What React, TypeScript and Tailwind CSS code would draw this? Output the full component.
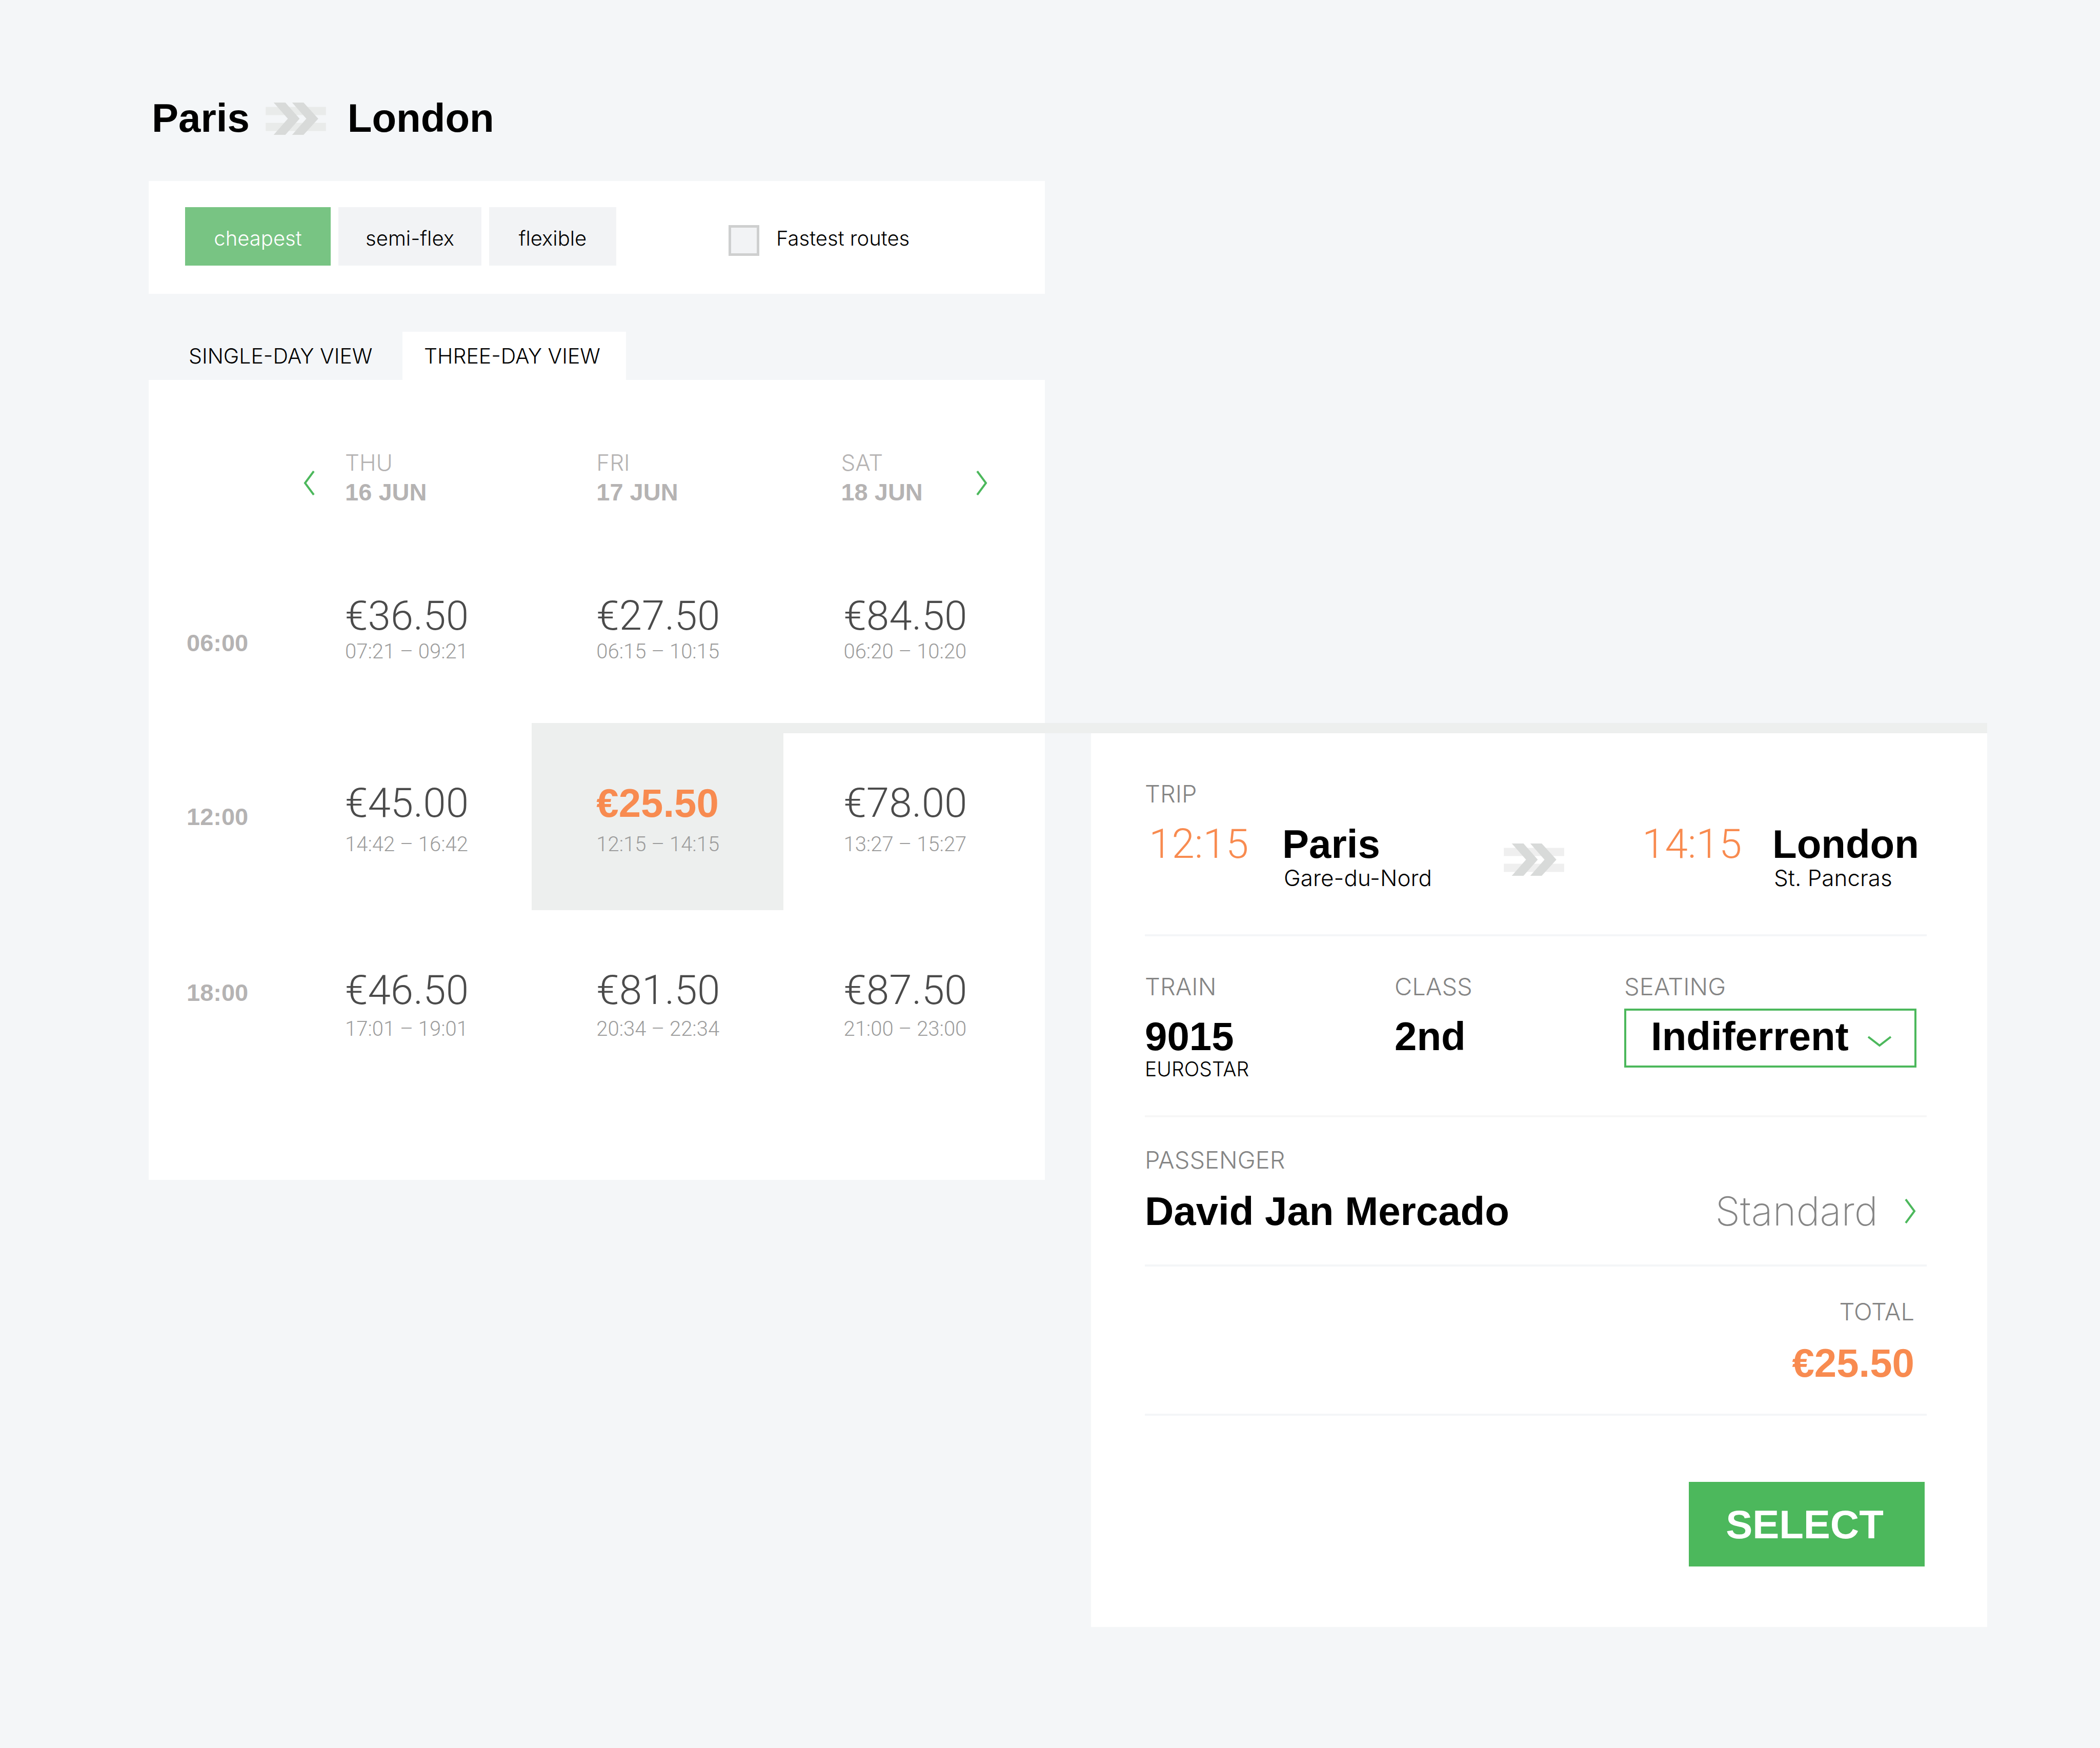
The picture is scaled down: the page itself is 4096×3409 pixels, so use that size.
import React, { useState } from 'react'

const light = 'font-["Inter",sans-serif] font-light'
const thin = 'font-["Inter",sans-serif] font-extralight'
const numeric = 'font-["Roboto",sans-serif] font-light'
const bold = 'font-["Liberation_Sans",sans-serif] font-bold'
const label = 'font-["Inter",sans-serif] font-light text-[47px] leading-[56px] text-[#858585]'

type Fare = { price: string; times: string }
type Row = { hour: string; hourPad: string; timePad: string; fares: Fare[] }

const days = [
  { day: 'THU', date: '16 JUN' },
  { day: 'FRI', date: '17 JUN' },
  { day: 'SAT', date: '18 JUN' },
]

const rows: Row[] = [
  {
    hour: '06:00',
    hourPad: 'pt-[179px]',
    timePad: 'pt-[6px]',
    fares: [
      { price: '€36.50', times: '07:21 – 09:21' },
      { price: '€27.50', times: '06:15 – 10:15' },
      { price: '€84.50', times: '06:20 – 10:20' },
    ],
  },
  {
    hour: '12:00',
    hourPad: 'pt-[153px]',
    timePad: 'pt-[17px]',
    fares: [
      { price: '€45.00', times: '14:42 – 16:42' },
      { price: '€25.50', times: '12:15 – 14:15' },
      { price: '€78.00', times: '13:27 – 15:27' },
    ],
  },
  {
    hour: '18:00',
    hourPad: 'pt-[131px]',
    timePad: 'pt-[12px]',
    fares: [
      { price: '€46.50', times: '17:01 – 19:01' },
      { price: '€81.50', times: '20:34 – 22:34' },
      { price: '€87.50', times: '21:00 – 23:00' },
    ],
  },
]

const columnPad = ['pl-[127px]', 'pl-[126px]', 'pl-[117px]']

function TrackArrow({ track, className }: { track: string; className: string }) {
  return (
    <svg viewBox="0 0 125 67" className={`h-[63px] w-[118px] shrink-0 ${className}`} aria-hidden="true">
      <path d="M0 9h125v17H0zM0 42h125v17H0z" fill={track} />
      <path d="M16.5 0h24.2l29.6 33.5L40.7 67H16.5L46 33.5z" fill="#d8dad9" />
      <path d="M54.8 0h23.7L109 33.5 78.5 67H54.8l29.5-33.5z" fill="#d8dad9" />
    </svg>
  )
}

function Chevron({ dir }: { dir: 'left' | 'right' }) {
  return (
    <svg viewBox="0 0 22 48" className="h-12 w-[22px]" fill="none" stroke="#4cb85c" strokeWidth="4" aria-hidden="true">
      <path d={dir === 'left' ? 'M20 1L3 24l17 23' : 'M2 1l17 23L2 47'} />
    </svg>
  )
}

function Filters() {
  const [active, setActive] = useState('cheapest')
  const options = [
    { name: 'cheapest', width: 'w-[284px]' },
    { name: 'semi-flex', width: 'w-[279px]' },
    { name: 'flexible', width: 'w-[248px]' },
  ]
  return (
    <section className={`mt-[83px] flex bg-white px-[71px] pt-[51px] pb-[55px] ${light} text-[40px] leading-[56px] text-black`}>
      <div className="flex gap-[15px]">
        {options.map((o) => (
          <button
            key={o.name}
            type="button"
            onClick={() => setActive(o.name)}
            className={`h-[114px] pt-2 ${o.width} ${active === o.name ? 'bg-[#78c483] text-white' : 'bg-[#f2f3f5]'}`}
          >
            {o.name}
          </button>
        ))}
      </div>
      <label className="ml-[219px] flex items-center gap-[33px] pt-2">
        <input
          type="checkbox"
          className="mt-2 size-[60px] appearance-none border-[5px] border-[#cecfcf] bg-[#f2f3f5] checked:bg-[#78c483]"
        />
        Fastest routes
      </label>
    </section>
  )
}

function FareTable() {
  return (
    <section className="bg-white pt-[133px] pb-[161px]">
      <table className="w-full table-fixed border-collapse text-left">
        <colgroup>
          <col className="w-[14.65%]" />
          <col className="w-[28.1%]" />
          <col className="w-[28.1%]" />
          <col />
        </colgroup>
        <thead>
          <tr className="h-[171px] align-top text-[#b5b3b3]">
            <td />
            {days.map((d, i) => {
              const text = (
                <span className="block">
                  <span className={`block text-[44px] leading-[56px] ${light}`}>{d.day}</span>
                  <span className={`block text-[47px] leading-[60px] ${bold}`}>{d.date}</span>
                </span>
              )
              if (i === 0)
                return (
                  <th key={d.day} scope="col">
                    <div className="flex gap-[59px] pl-[46px]">
                      <button type="button" aria-label="Previous days" className="pt-[19px]">
                        <Chevron dir="left" />
                      </button>
                      {text}
                    </div>
                  </th>
                )
              if (i === 2)
                return (
                  <th key={d.day} scope="col">
                    <div className="flex justify-between px-[112px]">
                      {text}
                      <button type="button" aria-label="Next days" className="pt-[19px]">
                        <Chevron dir="right" />
                      </button>
                    </div>
                  </th>
                )
              return (
                <th key={d.day} scope="col" className="pl-[126px]">
                  {text}
                </th>
              )
            })}
          </tr>
        </thead>
        <tbody>
          {rows.map((r) => (
            <tr key={r.hour} className="h-[365px] align-top">
              <th scope="row" className={`pl-[74px] text-[47px] leading-[60px] text-[#b5b3b3] ${bold} ${r.hourPad}`}>
                {r.hour}
              </th>
              {r.fares.map((f, i) => {
                const selected = f.price === '€25.50'
                return (
                  <td key={f.price} className={selected ? 'bg-[#edefee]' : ''}>
                    <button type="button" aria-pressed={selected} className={`block w-full pt-[116px] text-left ${columnPad[i]}`}>
                      <span
                        className={`block leading-[80px] ${selected ? bold : numeric} ${selected ? 'text-[78px] text-[#f88b50]' : 'text-[80px] text-[#4b4b4b]'}`}
                      >
                        {f.price}
                      </span>
                      <span className={`block text-[40px] leading-[48px] text-[#9c9c9c] ${numeric} ${r.timePad}`}>{f.times}</span>
                    </button>
                  </td>
                )
              })}
            </tr>
          ))}
        </tbody>
      </table>
    </section>
  )
}

function Stop({ city, station }: { city: string; station: string }) {
  return (
    <div className="text-black">
      <div className={`text-[78px] leading-[80px] ${bold}`}>{city}</div>
      <div className={`pl-[3px] text-[44px] leading-[52px] whitespace-nowrap ${light}`}>{station}</div>
    </div>
  )
}

function TripCard() {
  return (
    <aside className="relative mt-[1410px] border-t-[20px] border-[#edefee] bg-white pr-[118px] pb-[118px] pl-[105px]">
      {/* Bar that ties the chosen fare to this card */}
      <div className="absolute -top-5 right-0 h-5 w-[162.4%] bg-[#edefee]" />

      <section className="border-b-4 border-[#f4f6f8] pt-[90px] pb-[84px]">
        <h2 className={label}>TRIP</h2>
        <div className="mt-[30px] grid grid-cols-[268fr_432fr_270fr_254fr_301fr] text-[80px] leading-[80px]">
          <time className={`pl-2 text-[#f88b50] ${numeric}`}>12:15</time>
          <Stop city="Paris" station="Gare-du-Nord" />
          <TrackArrow track="#efefef" className="mt-[39px]" />
          <time className={`text-[#f88b50] ${numeric}`}>14:15</time>
          <Stop city="London" station="St. Pancras" />
        </div>
      </section>

      <section className="grid grid-cols-[487fr_448fr_590fr] border-b-4 border-[#f7f7f7] pt-[70px] pb-[66px] text-black">
        <div>
          <h2 className={label}>TRAIN</h2>
          <div className={`mt-[29px] text-[78px] leading-[80px] ${bold}`}>9015</div>
          <div className={`text-[39px] leading-[48px] ${light}`}>EUROSTAR</div>
        </div>
        <div>
          <h2 className={label}>CLASS</h2>
          <div className={`mt-[29px] text-[78px] leading-[80px] ${bold}`}>2nd</div>
        </div>
        <div className="pr-5">
          <label htmlFor="seating" className={`block ${label}`}>
            SEATING
          </label>
          <div className="relative mt-[15px]">
            <select
              id="seating"
              className={`h-[115px] w-full appearance-none border-4 border-[#4cb85c] bg-white pb-2 pl-[48px] text-[78px] leading-[80px] ${bold}`}
            >
              <option>Indiferrent</option>
              <option>Window</option>
              <option>Aisle</option>
            </select>
            <svg
              viewBox="0 0 46 22"
              className="pointer-events-none absolute top-[53px] right-[49px] h-[22px] w-[46px]"
              fill="none"
              stroke="#4cb85c"
              strokeWidth="4"
              aria-hidden="true"
            >
              <path d="M1 2l22 17L45 2" />
            </svg>
          </div>
        </div>
      </section>

      <section className="border-b-4 border-[#f4f6f8] pt-[55px] pb-[64px]">
        <h2 className={label}>PASSENGER</h2>
        <div className="mt-[32px] flex justify-between pr-[21px] text-[78px] leading-[80px]">
          <div className={`text-black ${bold}`}>David Jan Mercado</div>
          <button type="button" className={`flex items-center gap-[52px] text-[#858585] ${thin}`}>
            Standard
            <Chevron dir="right" />
          </button>
        </div>
      </section>

      <section className="border-b-4 border-[#f4f6f8] pt-[60px] pr-6 pb-[59px] text-right">
        <h2 className={label}>TOTAL</h2>
        <div className={`mt-[32px] text-[78px] leading-[80px] text-[#f88b50] ${bold}`}>€25.50</div>
      </section>

      <div className="flex justify-end pt-[129px] pr-1">
        <button type="button" className={`h-[165px] w-[460px] bg-[#4cb85c] pr-2 text-[78px] leading-[80px] text-white ${bold}`}>
          SELECT
        </button>
      </div>
    </aside>
  )
}

export default function App() {
  return (
    <main className="grid min-h-screen grid-cols-[1748fr_90fr_1748fr] items-start bg-[#f4f6f8] pr-[220px] pl-[290px]">
      <div className="pt-[190px]">
        <h1 className={`flex pl-[6px] text-[78px] leading-[80px] text-black ${bold}`}>
          Paris
          <TrackArrow track="#e9ebea" className="mt-[10px] mr-[42px] ml-[31px]" />
          London
        </h1>
        <Filters />
        <div role="tablist" className={`mt-[74px] flex text-[41px] leading-[56px] text-black ${light}`}>
          <button type="button" role="tab" aria-selected="false" className="h-[94px] w-[495px] pl-[78px] text-left">
            SINGLE-DAY VIEW
          </button>
          <button type="button" role="tab" aria-selected="true" className="h-[94px] w-[436px] bg-white pr-2">
            THREE-DAY VIEW
          </button>
        </div>
        <FareTable />
      </div>
      <div />
      <TripCard />
    </main>
  )
}
